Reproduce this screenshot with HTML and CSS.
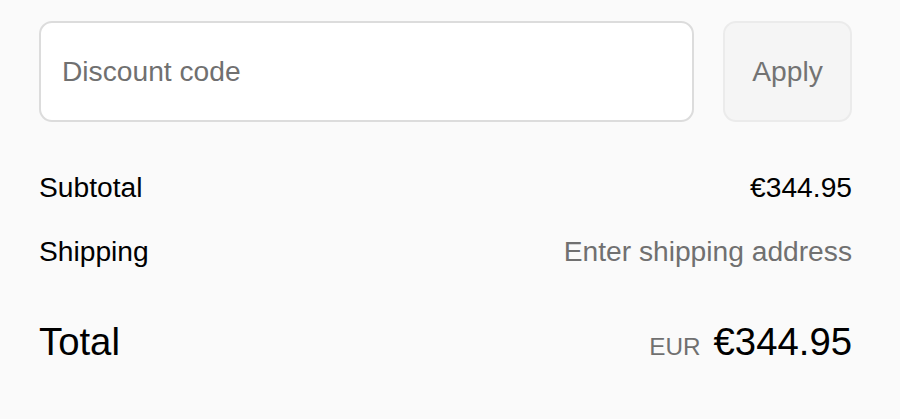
FILE: index.html
```html
<!DOCTYPE html>
<html lang="en">
<head>
<meta charset="utf-8">
<title>Order summary</title>
<link rel="stylesheet" href="styles.css">
</head>
<body>
<div class="summary">
  <form class="discount" onsubmit="return false">
    <input class="discount-input" type="text" placeholder="Discount code" aria-label="Discount code">
    <button class="apply" type="submit" disabled>Apply</button>
  </form>
  <div class="lines">
    <div class="line">
      <span class="label">Subtotal</span>
      <span class="value">€344.95</span>
    </div>
    <div class="line">
      <span class="label">Shipping</span>
      <span class="value muted">Enter shipping address</span>
    </div>
  </div>
  <div class="total">
    <span class="total-label">Total</span>
    <span class="total-value"><span class="currency">EUR</span><span class="amount">€344.95</span></span>
  </div>
</div>
</body>
</html>
```
FILE: styles.css
```css
* { box-sizing: border-box; }

html, body {
  margin: 0;
  background: #fafafa;
}

body {
  font-family: "Liberation Sans", Arial, sans-serif;
  color: #000;
}

.summary {
  padding: 21px 48px 0 39px;
}

.discount {
  display: flex;
  gap: 29px;
  margin: 0;
}

.discount-input {
  flex: 1;
  height: 101px;
  border: 2px solid #dcdcdc;
  border-radius: 13px;
  background: #fff;
  padding: 0 21px;
  font-family: inherit;
  font-size: 28.2px;
  color: #000;
  outline: none;
}

.discount-input::placeholder {
  color: #707070;
}

.apply {
  width: 129px;
  height: 101px;
  border: 2px solid #ebebeb;
  border-radius: 13px;
  background: #f5f5f5;
  color: #737373;
  font-family: inherit;
  font-size: 28.2px;
  padding: 0;
}

.lines {
  margin-top: 45px;
  display: flex;
  flex-direction: column;
  gap: 24px;
}

.line {
  display: flex;
  justify-content: space-between;
  align-items: baseline;
  font-size: 28.2px;
  line-height: 40px;
}

.muted {
  color: #707070;
}

.total {
  margin-top: 46px;
  display: flex;
  justify-content: space-between;
  align-items: baseline;
  line-height: 50px;
}

.total-label {
  font-size: 38.3px;
}

.total-value {
  display: flex;
  align-items: baseline;
  gap: 13px;
}

.currency {
  font-size: 24.3px;
  color: #707070;
}

.amount {
  font-size: 38.3px;
}
```
